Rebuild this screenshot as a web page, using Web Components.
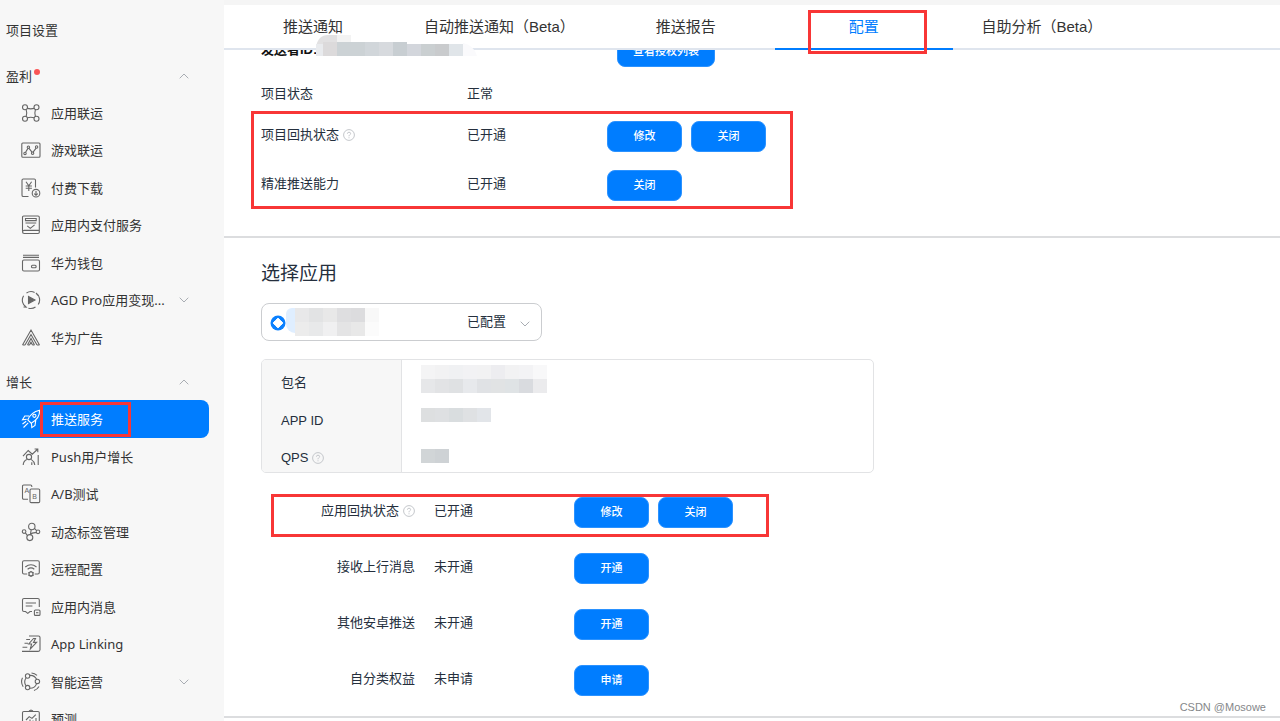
<!DOCTYPE html>
<html lang="zh-CN">
<head>
<meta charset="utf-8">
<meta name="viewport" content="width=device-width, initial-scale=1">
<title>推送服务 - 配置</title>
<style>
  body { margin: 0; background: #fff; font-family: "Liberation Sans", "Noto Sans CJK SC", sans-serif; font-size: 13px; color: #252f3d; }
</style>
</head>
<body>
<push-console></push-console>

<script>
const ICONS = {
  union: '<circle cx="4" cy="4.3" r="2.5"/><circle cx="15.5" cy="4.3" r="2.5"/><circle cx="4" cy="15.8" r="2.5"/><circle cx="15.5" cy="15.8" r="2.5"/><path d="M6.3 5.4Q9.8 6.3 13.2 5.4M6.3 14.7Q9.8 13.8 13.2 14.7M5.2 6.6Q6.3 10 5.2 13.5M14.4 6.6Q13.3 10 14.4 13.5"/>',
  game: '<rect x=".8" y="3" width="18.2" height="14.2" rx="1"/><circle cx="4" cy="13.4" r="1.2"/><circle cx="7.4" cy="7.2" r="1.2"/><circle cx="11.6" cy="13.2" r="1.2"/><circle cx="15.6" cy="7" r="1.2"/><path d="M4.6 12.2L6.9 8.4M8 8.4L11 12.1M12.1 12.1L15.1 8.2"/>',
  paid: '<path d="M7.5 18.5H2.3Q1 18.5 1 17.2V2.3Q1 1 2.3 1H13.2Q14.5 1 14.5 2.3V9.5"/><path d="M5 3.8L7.8 7.8L10.6 3.8M7.8 7.8V13M4.7 8H10.9M4.7 10.3H10.9"/><circle cx="15" cy="15.2" r="3.8"/><path d="M15 13V17M13.2 15.6L15 17.2L16.8 15.6"/>',
  inpay: '<path d="M1.5 16V2.2Q1.5 1 2.7 1H17Q18.3 1 18.3 2.2V17.3Q18.3 18.5 17 18.5H3.2Q1.5 18.5 1.5 16.8Q1.5 15.4 3.2 15.4H18"/><path d="M4.5 3.5H15.2V5.6H4.5ZM4.5 8H15.2M6.2 10.8L9.3 13.4L13.6 9.8"/>',
  wallet: '<path d="M2 2.2H18M2 4.4H18"/><rect x="1.5" y="7" width="17" height="11" rx="1.4"/><rect x="10.5" y="12.3" width="4.6" height="2.4" rx="1"/>',
  play: '<path d="M5.2 17.2A8.3 8.3 0 0 1 2.6 5.8M5.5 3A8.3 8.3 0 0 1 13.6 2.4M15 3A8.3 8.3 0 0 1 17.2 14.5M14.5 17A8.3 8.3 0 0 1 7.4 18.2M3 14.8L5.2 17.2L2.5 17M16.8 5.5L15 3"/><path d="M7.5 6.5L14 10L7.5 13.5Z" fill="currentColor"/>',
  ads: '<path d="M1.5 17L10 2L18.5 17M4 17L10 6.5L16 17M6.5 17L10 10.5L13.5 17M8.5 17L10 14.2L11.5 17M1.5 17H4M16 17H18.5M6.5 17H8.5M11.5 17H13.5"/>',
  rocket: '<path d="M6.8 10.8Q10 3.2 18.6 1.3Q19 9.5 10.2 14.2ZM8 7H3.8L1.5 10.8L5.8 10.2M14.8 11.2L14 16.5L10.8 18.6L10.5 14.3M5.2 12.2L1.5 15M7.2 13.8L2.5 18.5"/><circle cx="13.4" cy="6.8" r="1.6"/>',
  growth: '<circle cx="8" cy="10" r="2.6"/><path d="M2.2 18Q2.4 14 5.8 12.5M10.2 12.4Q13.4 14.5 13.8 18M2 9.2L7.2 3.5L11.3 7.2L16.8 2M13.6 2H16.8V5.2M17.2 8V18M10.8 15.2V18"/>',
  ab: '<path d="M7 15.3H2.7Q1.5 15.3 1.5 14V2.2Q1.5 1 2.7 1H9.6Q10.8 1 10.8 2.2V3"/><rect x="9" y="5" width="9.7" height="13.6" rx="1.2"/><text x="3.4" y="9.2">A</text><text x="11.2" y="14.8">B</text>',
  tags: '<circle cx="10.8" cy="4.5" r="3.2"/><circle cx="3.1" cy="9.6" r="1.8"/><circle cx="17" cy="9.8" r="1.8"/><circle cx="8.8" cy="15.6" r="3"/><path d="M13.4 6.4L15.6 8.6M10.2 7.7L9.4 12.6M4.4 10.9L6.5 13.6M15.4 10.7Q11 10.4 9.4 12.4"/>',
  remote: '<path d="M6.2 15H3Q1.5 15 1.5 13.5V3.3Q1.5 1.8 3 1.8H16.8Q18.3 1.8 18.3 3.3V13.5Q18.3 15 16.8 15H13.7"/><path d="M4.3 8Q10 3.4 15.5 8M6.6 10.2Q10 7.5 13.3 10.2"/><circle cx="10" cy="14.9" r="2"/><path d="M10 11.9V12.9M10 16.9V18M7.3 13.4L8.2 13.9M12.7 13.4L11.8 13.9M7.3 16.5L8.2 16M12.7 16.5L11.8 16"/>',
  message: '<path d="M11 14.5H9L6.8 16.4L4.5 14.5H3Q1.5 14.5 1.5 13V3Q1.5 1.5 3 1.5H16.8Q18.3 1.5 18.3 3V10"/><path d="M4.7 6H15M4.7 9H11.4"/><rect x="13.4" y="13" width="5.6" height="5.4" rx="1"/><path d="M15 15.7H17.4"/>',
  linking: '<path d="M8 2H17.5Q19 2 19 3.5V15.8Q19 17.4 17.2 17.4H1M5.2 5.5H9M3.5 9.3H7M1.5 13.2H6.3"/><path d="M12.5 4.5L7.7 10H10.6L9.4 14.8L15.6 8.4H12.5L14.5 4.5Z"/>',
  smart: '<path d="M8.8 3.4A7 7 0 0 1 15.6 7.3M15.6 11.6A7 7 0 0 1 8.8 16.3M5 13.8A7 7 0 0 1 5 6M10.5 1A9 9 0 0 1 16 3.4M18 14.5A9 9 0 0 1 13 18.6M2.2 14.7A9 9 0 0 1 1.5 5.8"/><circle cx="6.6" cy="4" r="2.2"/><circle cx="16.4" cy="9.4" r="2.2"/><circle cx="6.6" cy="15.6" r="2.2"/>',
  predict: '<path d="M4 18.5H2.8Q1.5 18.5 1.5 17.2V3.8Q1.5 2.5 2.8 2.5H17Q18.3 2.5 18.3 3.8V17.2Q18.3 18.5 17 18.5H16M8 2L10 1L12 2M5 11L8.2 7.6L11 9.4L14.8 5.6M6 18V12.5M9 18V10.5M12 18V11.5M15 18V9"/>'
};

function define(name, html, setup) {
  const tpl = document.createElement('template');
  tpl.innerHTML = html;
  customElements.define(name, class extends HTMLElement {
    connectedCallback() {
      if (this.shadowRoot) return;
      const root = this.attachShadow({ mode: 'open' });
      root.append(tpl.content.cloneNode(true));
      if (setup) setup(this, root);
    }
  });
}

define('line-icon', `
  <style>
    :host { display: block; flex: none; width: 20px; height: 20px; color: inherit; }
    svg { display: block; fill: none; stroke: currentColor; stroke-width: 1.1; }
    text { font: 7px "Liberation Sans", sans-serif; fill: currentColor; stroke: none; }
  </style>
  <svg width="20" height="20" viewBox="0 0 20 20" aria-hidden="true"></svg>`,
  (el, root) => { root.querySelector('svg').innerHTML = ICONS[el.getAttribute('name')]; });

define('chevron-mark', `
  <style>
    :host { display: block; width: 10px; height: 6px; color: #a9adb3; }
    :host([up]) { transform: rotate(180deg); }
    svg { display: block; fill: none; stroke: currentColor; }
  </style>
  <svg width="10" height="6" viewBox="0 0 10 6" aria-hidden="true"><path d="M.7 .7L5 5L9.3 .7"/></svg>`);

define('help-mark', `
  <style>
    :host { display: inline-block; width: 12px; height: 12px; margin-left: 4px; vertical-align: -2px; }
    svg { display: block; fill: none; stroke: #c4c7cb; }
  </style>
  <svg width="12" height="12" viewBox="0 0 12 12" aria-hidden="true"><circle cx="6" cy="6" r="5.4"/><path d="M4.4 4.7Q4.5 3.2 6 3.2Q7.6 3.2 7.6 4.6Q7.6 5.4 6.7 5.9Q6 6.3 6 7.3M6 8.3V9.3"/></svg>`);

/* Red annotation frame drawn over its content; --edge is its inset. */
define('mark-box', `
  <style>
    :host { display: block; position: relative; }
    :host::after { content: ""; position: absolute; inset: var(--edge, 0); border: 3px solid #f83636; pointer-events: none; z-index: 3; }
  </style><slot></slot>`);

/* Mosaic over private values: rows split by "|", cells 14px square. */
define('pixel-mask', `
  <style>
    :host { display: block; width: fit-content; }
    svg { display: block; }
  </style>
  <svg aria-hidden="true" shape-rendering="crispEdges"></svg>`,
  (el, root) => {
    const rows = el.getAttribute('cells').split('|').map(r => r.trim().split(/\s+/));
    const svg = root.querySelector('svg');
    svg.setAttribute('width', rows[0].length * 14);
    svg.setAttribute('height', rows.length * 14);
    svg.innerHTML = rows.map((r, y) => r.map((c, x) =>
      `<rect x="${x * 14}" y="${y * 14}" width="14" height="14" fill="#${c}"/>`).join('')).join('');
  });

define('action-button', `
  <style>
    :host { display: block; flex: none; }
    button { display: block; box-sizing: border-box; min-width: 75px; height: 31px; padding: 0 15px; border: 1px solid #2b92ff; border-radius: 8px; background: #007dff; color: #fff; font: 500 11px/27px "Liberation Sans", "Noto Sans CJK SC", sans-serif; cursor: pointer; }
  </style>
  <button type="button"><slot></slot></button>`);

define('nav-item', `
  <style>
    :host { display: block; height: 37px; margin-right: 15px; color: #333; --ink: #666; }
    :host([tall]) { height: 38px; }
    :host([active]) { background: #007dff; border-radius: 0 8px 8px 0; color: #fff; --ink: #fff; }
    a { display: flex; align-items: center; gap: 10px; height: 100%; padding: 0 20px 0 21px; color: inherit; text-decoration: none; white-space: nowrap; }
    line-icon { color: var(--ink); }
    .label { flex: 1; line-height: 20px; }
    chevron-mark { display: none; }
    :host([more]) chevron-mark { display: block; }
  </style>
  <a href="#"><line-icon></line-icon><span class="label"><slot></slot></span><chevron-mark></chevron-mark></a>`,
  (el, root) => {
    const icon = document.createElement('line-icon');
    icon.setAttribute('name', el.getAttribute('icon'));
    root.querySelector('line-icon').replaceWith(icon);
  });

define('nav-group', `
  <style>
    :host { display: block; }
    button { display: flex; align-items: center; width: 100%; height: 36px; padding: 0 35px 0 6px; border: 0; background: none; color: #333; font: inherit; line-height: 20px; text-align: left; }
    .dot { display: none; width: 6px; height: 6px; margin: 0 0 9px 2px; border-radius: 50%; background: #fa5555; }
    :host([alert]) .dot { display: block; }
    chevron-mark { margin-left: auto; }
  </style>
  <button type="button" aria-expanded="true"><span class="name"></span><i class="dot"></i><chevron-mark up></chevron-mark></button>
  <slot></slot>`,
  (el, root) => { root.querySelector('.name').textContent = el.getAttribute('name'); });

define('side-nav', `
  <style>
    :host { display: block; box-sizing: border-box; height: 100%; overflow: hidden; background: #f7f7f7; font-family: "Noto Sans", "Noto Sans CJK SC", sans-serif; }
    .top { display: block; padding: 20px 6px 8px; line-height: 20px; color: #333; text-decoration: none; }
    nav-group { margin-top: 10px; }
    nav-group + nav-group { margin-top: 8px; }
  </style>
  <nav>
    <a class="top" href="#">项目设置</a>
    <nav-group name="盈利" alert>
      <nav-item icon="union">应用联运</nav-item>
      <nav-item icon="game" tall>游戏联运</nav-item>
      <nav-item icon="paid">付费下载</nav-item>
      <nav-item icon="inpay" tall>应用内支付服务</nav-item>
      <nav-item icon="wallet">华为钱包</nav-item>
      <nav-item icon="play" more tall>AGD Pro应用变现...</nav-item>
      <nav-item icon="ads">华为广告</nav-item>
    </nav-group>
    <nav-group name="增长">
      <mark-box style="--edge: 2px 93px 1px 40px"><nav-item icon="rocket" active tall>推送服务</nav-item></mark-box>
      <nav-item icon="growth">Push用户增长</nav-item>
      <nav-item icon="ab" tall>A/B测试</nav-item>
      <nav-item icon="tags">动态标签管理</nav-item>
      <nav-item icon="remote" tall>远程配置</nav-item>
      <nav-item icon="message">应用内消息</nav-item>
      <nav-item icon="linking" tall>App Linking</nav-item>
      <nav-item icon="smart" more>智能运营</nav-item>
      <nav-item icon="predict">预测</nav-item>
    </nav-group>
  </nav>`);

define('tab-link', `
  <style>
    :host { display: block; }
    a { display: block; box-sizing: border-box; min-width: 178px; height: 45px; padding: 0 22px; border-bottom: 2px solid transparent; color: #333; font-size: 15px; line-height: 43px; text-align: center; text-decoration: none; white-space: nowrap; }
    :host([active]) a { color: #007dff; border-color: #007dff; }
  </style>
  <a href="#"><slot></slot></a>`);

define('tab-strip', `
  <style>
    :host { display: block; position: relative; z-index: 1; background: #fff; border-top: 5px solid #f5f5f5; }
    nav { display: flex; box-shadow: inset 0 -2px #dfe5ee; }
    .mask { position: absolute; left: 92px; top: 30px; }
  </style>
  <nav>
    <tab-link>推送通知</tab-link>
    <tab-link>自动推送通知（Beta）</tab-link>
    <tab-link>推送报告</tab-link>
    <mark-box style="--edge: 5px 26px -4px 33px"><tab-link active>配置</tab-link></mark-box>
    <tab-link>自助分析（Beta）</tab-link>
  </nav>
  <svg class="mask" width="162" height="22" viewBox="0 0 162 22" aria-hidden="true">
    <path d="M0 21V12Q2 0 12 0H21V21Z" fill="#e2e1e2"/><path d="M21 0H35V8H21Z" fill="#f3f3f3"/><path d="M0 9H7V21H0Z" fill="#e9ebee"/>
    <path d="M7 7H21V21H7Z" fill="#dcdadb"/><path d="M21 7H49V21H21Z" fill="#ccd2d5"/><path d="M49 7H63V21H49Z" fill="#d1d6da"/><path d="M63 7H77V21H63Z" fill="#d7dade"/><path d="M77 7H91V21H77Z" fill="#c8ced2"/>
    <path d="M91 9H105V21H91Z" fill="#d3d6dc"/><path d="M105 9H119V21H105Z" fill="#cacfd1"/><path d="M119 9H133V21H119Z" fill="#c9cbcd"/><path d="M133 9H147V21H133Z" fill="#e0e5e9"/><path d="M147 8Q158 10 161 21H147Z" fill="#fafafc"/>
  </svg>`);

/* Label, state, actions. [end] is the right-aligned form variant. */
define('setting-row', `
  <style>
    :host { display: grid; grid-template-columns: 206px 140px auto; width: fit-content; line-height: 28px; white-space: nowrap; }
    :host([end]) { grid-template-columns: 154px 159px auto; }
    :host([end]) .label { text-align: right; }
    :host([end]) .state { padding-left: 19px; }
    :host([strong]) .label { font-weight: 700; color: #111; }
    :host([strong]) .actions { padding-left: 10px; }
    .actions { display: flex; gap: 9px; }
  </style>
  <div class="label"><slot name="label"></slot></div>
  <div class="state"><slot name="state"></slot></div>
  <div class="actions"><slot></slot></div>`);

define('app-picker', `
  <style>
    :host { display: block; position: relative; width: 281px; }
    select { display: block; box-sizing: border-box; width: 100%; height: 38px; padding: 0 30px 2px 205px; border: 1px solid #cbcdd0; border-radius: 8px; background: #fff; color: #252f3d; font: 13px "Liberation Sans", "Noto Sans CJK SC", sans-serif; appearance: none; }
    .logo { position: absolute; left: 9px; top: 12px; pointer-events: none; }
    .mask { position: absolute; left: 25px; top: 5px; display: flex; pointer-events: none; }
    .mask i { width: 9px; height: 25px; border-radius: 8px 0 0 12px; background: #dfeeff; }
    chevron-mark { position: absolute; right: 12px; top: 18px; pointer-events: none; }
  </style>
  <select aria-label="选择应用"><option>已配置</option></select>
  <svg class="logo" width="16" height="16" viewBox="0 0 16 16" aria-hidden="true"><circle cx="8" cy="8" r="7.5" fill="#0a80ff"/><path d="M8 3.2L10.5 5.5L12.8 8L10.5 10.5L8 12.8L5.5 10.5L3.2 8L5.5 5.5Z" fill="#fff" stroke="#fff" stroke-width="1" stroke-linejoin="round"/></svg>
  <div class="mask"><i></i><pixel-mask cells="e8e8e9 e2e3e4 e8e8e8 dedee0 dcdcde f8f8f8|ececec e8e9ea f0f0f1 e4e4e5 e8e8e8 fbfbfb"></pixel-mask></div>
  <chevron-mark></chevron-mark>`);

define('app-info', `
  <style>
    :host { display: block; max-width: 613px; }
    table { width: 100%; border: 1px solid #e2e3e5; border-radius: 5px; border-spacing: 0; overflow: hidden; }
    th, td { box-sizing: border-box; height: 37px; padding: 0 19px; text-align: left; }
    th { width: 140px; border-right: 1px solid #e2e3e5; background: #f7f7f7; font-weight: 400; line-height: 20px; }
    .first > * { height: 42px; }
    .first th { padding-top: 4px; }
    .first td { padding-bottom: 4px; }
    .last > * { height: 33px; }
    .last th { padding-top: 4px; }
    pixel-mask.low { padding-bottom: 12px; }
  </style>
  <table>
    <tr class="first"><th scope="row">包名</th><td><pixel-mask cells="f4f4f5 f2f2f3 f0f1f3 f2f2f4 f2f2f3 ededf0 f2f2f3 f3f3f5 f8f8f9|e6e7e9 e2e3e5 dfe1e3 e7e9ec e0e2e5 e1e3e4 dfe3e5 d9dbdf ebebed"></pixel-mask></td></tr>
    <tr><th scope="row">APP ID</th><td><pixel-mask class="low" cells="dddfe0 dee0e2 d9dddf dfe1e3 e2e5e9"></pixel-mask></td></tr>
    <tr class="last"><th scope="row">QPS<help-mark></help-mark></th><td><pixel-mask cells="d1d5d7 ced2d5"></pixel-mask></td></tr>
  </table>`);

define('push-console', `
  <style>
    :host { display: grid; grid-template-columns: 224px minmax(0, 1fr); height: 100vh; overflow: hidden; }
    main { position: relative; min-width: 0; min-height: 0; overflow: hidden; }
    section { padding: 0 37px; border-bottom: 2px solid #dcdddf; }
    .project { margin-top: -14px; padding-bottom: 35px; }
    .status { margin: 13px 0; }
    .pair { display: grid; gap: 18px; }
    .framed { width: fit-content; }
    h2 { margin: 0 0 14px; padding-top: 21px; font-size: 19px; line-height: 30px; font-weight: 400; }
    app-info { margin: 18px 0 24px; }
    .form { display: grid; gap: 25px; padding-bottom: 20px; }
    .credit { position: absolute; right: 14px; bottom: 6px; font-size: 11px; line-height: 16px; color: #85878a; }
  </style>
  <side-nav></side-nav>
  <main>
    <tab-strip></tab-strip>
    <section class="project">
      <setting-row strong><span slot="label">发送者ID:</span><action-button>查看授权列表</action-button></setting-row>
      <setting-row class="status"><span slot="label">项目状态</span><span slot="state">正常</span></setting-row>
      <mark-box class="framed" style="--edge: -10px -27px -8px -10px">
        <div class="pair">
          <setting-row><span slot="label">项目回执状态<help-mark></help-mark></span><span slot="state">已开通</span><action-button>修改</action-button><action-button>关闭</action-button></setting-row>
          <setting-row><span slot="label">精准推送能力</span><span slot="state">已开通</span><action-button>关闭</action-button></setting-row>
        </div>
      </mark-box>
    </section>
    <section>
      <h2>选择应用</h2>
      <app-picker></app-picker>
      <app-info></app-info>
      <div class="form">
        <mark-box class="framed" style="--edge: -3px -36px -9px 10px"><setting-row end><span slot="label">应用回执状态<help-mark></help-mark></span><span slot="state">已开通</span><action-button>修改</action-button><action-button>关闭</action-button></setting-row></mark-box>
        <setting-row end><span slot="label">接收上行消息</span><span slot="state">未开通</span><action-button>开通</action-button></setting-row>
        <setting-row end><span slot="label">其他安卓推送</span><span slot="state">未开通</span><action-button>开通</action-button></setting-row>
        <setting-row end><span slot="label">自分类权益</span><span slot="state">未申请</span><action-button>申请</action-button></setting-row>
      </div>
    </section>
    <div class="credit">CSDN @Mosowe</div>
  </main>`);
</script>
</body>
</html>
